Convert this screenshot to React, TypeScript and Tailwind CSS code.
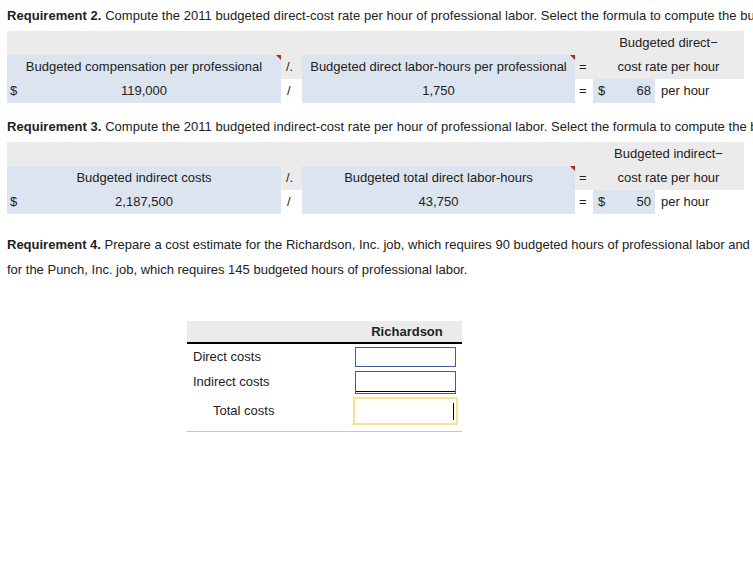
import React from "react";

const font = { fontFamily: '"Liberation Sans", Arial, sans-serif' };

function Tri() {
  return (
    <span className="absolute right-0 top-0 w-0 h-0 border-t-[5px] border-t-[#b22222] border-l-[5px] border-l-transparent" />
  );
}

function RateTable(props: {
  h1: string;
  h2: string;
  v1: string;
  v2: string;
  r1: string;
  result: string;
  tri1: boolean;
}) {
  return (
    <div className="w-[737px] text-[13px] text-[#222]">
      <div className="flex h-[24px] bg-[#ebebeb]">
        <div className="w-[586px]" />
        <div className="w-[151px] flex items-center justify-center">{props.r1}</div>
      </div>
      <div className="flex h-[24px] bg-[#ebebeb]">
        <div className="relative w-[274px] bg-[#dce4ef] flex items-center justify-center">
          {props.h1}
          {props.tri1 && <Tri />}
        </div>
        <div className="w-[21px] flex items-center pl-[5px]">/.</div>
        <div className="relative w-[273px] bg-[#dce4ef] flex items-center justify-center">
          {props.h2}
          <Tri />
        </div>
        <div className="w-[18px] flex items-center pl-[4px]">=</div>
        <div className="w-[151px] flex items-center justify-center">cost rate per hour</div>
      </div>
      <div className="flex h-[24px] bg-white">
        <div className="relative w-[274px] bg-[#dce4ef] flex items-center">
          <span className="absolute left-[3px]">$</span>
          <span className="w-full text-center">{props.v1}</span>
        </div>
        <div className="w-[21px] flex items-center pl-[6px]">/</div>
        <div className="w-[273px] bg-[#dce4ef] flex items-center justify-center">{props.v2}</div>
        <div className="w-[18px] flex items-center pl-[4px]">=</div>
        <div className="w-[62px] bg-[#dce4ef] flex items-center justify-between pl-[5px] pr-[4px]">
          <span>$</span>
          <span>{props.result}</span>
        </div>
        <div className="flex items-center pl-[6px]">per hour</div>
      </div>
    </div>
  );
}

export default function App() {
  return (
    <div className="w-[753px] h-[572px] overflow-hidden bg-white text-[#222] text-[13px]" style={font}>
      <div className="pl-[7px] pt-[7px]">
        <div className="h-[18px] leading-[18px] whitespace-nowrap overflow-hidden tracking-[0.04px]">
          <b>Requirement 2.</b> Compute the 2011 budgeted direct-cost rate per hour of professional labor. Select the formula to compute the budgeted direct-cost rate per hour.
        </div>
        <div className="mt-[6px]">
          <RateTable
            h1="Budgeted compensation per professional"
            h2="Budgeted direct labor-hours per professional"
            v1="119,000"
            v2="1,750"
            r1="Budgeted direct−"
            result="68"
            tri1={true}
          />
        </div>
        <div className="mt-[15px] h-[18px] leading-[18px] whitespace-nowrap overflow-hidden tracking-[0.04px]">
          <b>Requirement 3.</b> Compute the 2011 budgeted indirect-cost rate per hour of professional labor. Select the formula to compute the budgeted indirect-cost rate per hour.
        </div>
        <div className="mt-[6px]">
          <RateTable
            h1="Budgeted indirect costs"
            h2="Budgeted total direct labor-hours"
            v1="2,187,500"
            v2="43,750"
            r1="Budgeted indirect−"
            result="50"
            tri1={false}
          />
        </div>
        <div className="mt-[18px] leading-[25px] whitespace-nowrap">
          <div>
            <b>Requirement 4.</b> Prepare a cost estimate for the Richardson, Inc. job, which requires 90 budgeted hours of professional labor and
          </div>
          <div>for the Punch, Inc. job, which requires 145 budgeted hours of professional labor.</div>
        </div>
        <div className="ml-[180px] mt-[39px] w-[275px] border-b border-[#c8c8c8]">
          <div className="flex h-[23px] bg-[#ebebeb] border-b-2 border-black">
            <div className="w-[165px]" />
            <div className="w-[110px] flex items-center justify-center font-bold">Richardson</div>
          </div>
          <div className="flex h-[25px] items-center">
            <div className="w-[168px] pl-[6px]">Direct costs</div>
            <div className="w-[101px] h-[20px] border border-[#3f5f95]" />
          </div>
          <div className="flex h-[26px] items-center">
            <div className="w-[168px] pl-[6px]">Indirect costs</div>
            <div className="w-[101px] h-[23px] border border-[#3f5f95] flex flex-col justify-end">
              <div className="h-[1px] bg-black mb-[1px]" />
            </div>
          </div>
          <div className="flex h-[36px] items-start pt-[2px]">
            <div className="w-[166px] pl-[26px] h-[28px] flex items-center">Total costs</div>
            <div className="w-[105px] h-[28px] border-2 border-[#f7e38c] flex items-center justify-end pr-[2px]">
              <div className="w-[1px] h-[17px] bg-black" />
            </div>
          </div>
        </div>
      </div>
    </div>
  );
}
